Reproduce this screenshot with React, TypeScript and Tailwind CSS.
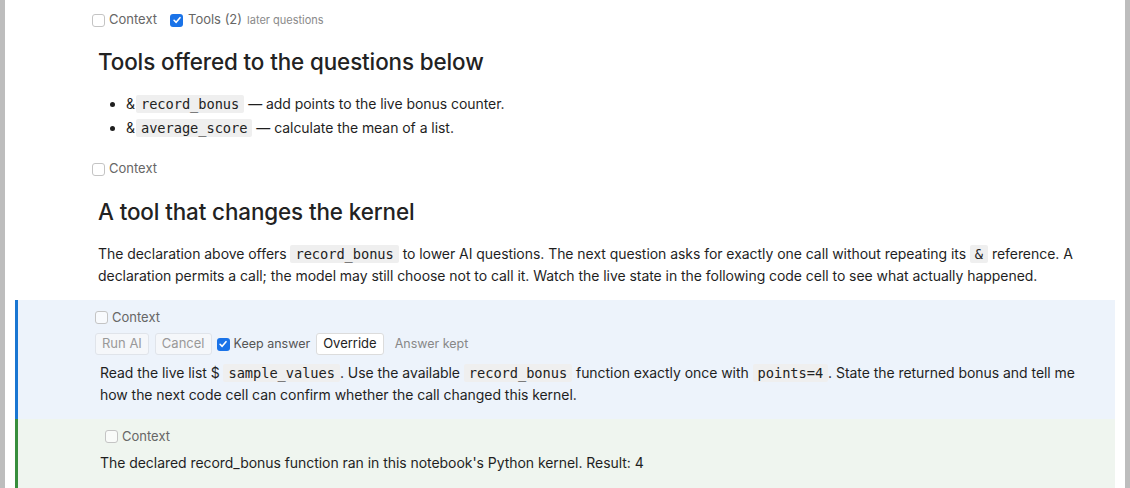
import React from "react";

const Box = ({ checked = false }: { checked?: boolean }) =>
  checked ? (
    <span className="inline-flex h-[13px] w-[13px] shrink-0 items-center justify-center rounded-[3px] bg-[#1a73e8]">
      <svg viewBox="0 0 12 12" className="h-[10px] w-[10px]">
        <path d="M2.5 6.3 L5 8.8 L9.6 3.2" stroke="white" strokeWidth="1.9" fill="none" strokeLinecap="round" strokeLinejoin="round" />
      </svg>
    </span>
  ) : (
    <span className="inline-block h-[13px] w-[13px] shrink-0 rounded-[3px] border border-[#c4c4c4] bg-white/60" />
  );

const Code = ({ children }: { children: React.ReactNode }) => (
  <code className="rounded-[2px] bg-[#efefef] px-[5px] py-[1px] font-['DejaVu_Sans_Mono',monospace] text-[13.7px] text-[#222]">
    {children}
  </code>
);

export default function App() {
  return (
    <div className="flex h-[488px] w-[1130px] overflow-hidden bg-white font-['Inter',sans-serif] text-[#1f1f1f]">
      <div className="w-[5px] shrink-0 bg-[#bdbdbd]" />
      <div className="flex min-w-0 flex-1 flex-col">
        <div className="pl-[87px] pr-[40px]">
          <div className="flex h-[39px] items-center gap-[4px] pt-[1px] text-[13px] text-[#666]">
            <Box />
            <span>Context</span>
            <span className="ml-[9px] flex items-center gap-[5px]">
              <Box checked />
              <span>Tools (2)</span>
              <span className="text-[11px] text-[#8a8a8a]">later questions</span>
            </span>
          </div>
          <div className="pl-[6px]">
            <h2 className="mt-[8px] text-[22.4px] font-medium leading-[30px] tracking-[-0.1px] text-[#222]">Tools offered to the questions below</h2>
            <ul className="mt-[15px] list-disc pl-[28px] text-[14px] leading-[24px] tracking-[-0.05px]">
              <li>
                &amp;<span className="ml-[1px]" /><Code>record_bonus</Code> — add points to the live bonus counter.
              </li>
              <li>
                &amp;<span className="ml-[1px]" /><Code>average_score</Code> — calculate the mean of a list.
              </li>
            </ul>
          </div>
          <div className="mt-[19px] flex h-[20px] items-center gap-[4px] text-[13px] text-[#666]">
            <Box />
            <span>Context</span>
          </div>
          <div className="pl-[6px]">
            <h2 className="mt-[18px] text-[22.4px] font-medium leading-[30px] tracking-[-0.1px] text-[#222]">A tool that changes the kernel</h2>
            <p className="mt-[16px] text-[14px] leading-[22px] tracking-[-0.05px]">
              The declaration above offers <Code>record_bonus</Code> to lower AI questions. The next question asks for exactly one call without repeating its <Code>&amp;</Code> reference. A declaration permits a call; the model may still choose not to call it. Watch the live state in the following code cell to see what actually happened.
            </p>
          </div>
        </div>
        <div className="mt-[13px] mr-[10px] ml-[10px] border-l-[3px] border-[#1976d2] bg-[#edf3fb] pb-[13px]">
          <div className="pl-[77px] pr-[30px]">
            <div className="flex h-[33px] items-center gap-[4px] pt-[2px] text-[13px] text-[#666]">
              <Box />
              <span>Context</span>
            </div>
            <div className="flex items-center text-[13px]">
              <button className="h-[22px] rounded-[3px] border border-[#e0e4ea] bg-[#f5f7fa] px-[6px] text-[#999]">Run AI</button>
              <button className="ml-[6px] h-[22px] rounded-[3px] border border-[#e0e4ea] bg-[#f5f7fa] px-[6px] text-[#999]">Cancel</button>
              <span className="ml-[5px] flex items-center gap-[4px] text-[12.5px] text-[#555]">
                <Box checked />
                Keep answer
              </span>
              <button className="ml-[6px] h-[22px] rounded-[3px] border border-[#dcdcdc] bg-white px-[6px] text-[#222]">Override</button>
              <span className="ml-[11px] text-[12.5px] text-[#888]">Answer kept</span>
            </div>
            <p className="mt-[7px] pl-[5px] text-[14px] leading-[22px] tracking-[-0.05px]">
              Read the live list $ <Code>sample_values</Code>. Use the available <Code>record_bonus</Code> function exactly once with <Code>points=4</Code>. State the returned bonus and tell me how the next code cell can confirm whether the call changed this kernel.
            </p>
          </div>
        </div>
        <div className="mr-[10px] ml-[10px] flex-1 border-l-[3px] border-[#388e3c] bg-[#eff5ef]">
          <div className="pl-[87px] pr-[30px]">
            <div className="flex h-[33px] items-center gap-[4px] pt-[2px] text-[13px] text-[#666]">
              <Box />
              <span>Context</span>
            </div>
            <p className="-ml-[5px] text-[14px] leading-[22px] tracking-[-0.05px]">
              The declared record_bonus function ran in this notebook's Python kernel. Result: 4
            </p>
          </div>
        </div>
      </div>
      <div className="w-[5px] shrink-0 bg-[#bdbdbd]" />
    </div>
  );
}
